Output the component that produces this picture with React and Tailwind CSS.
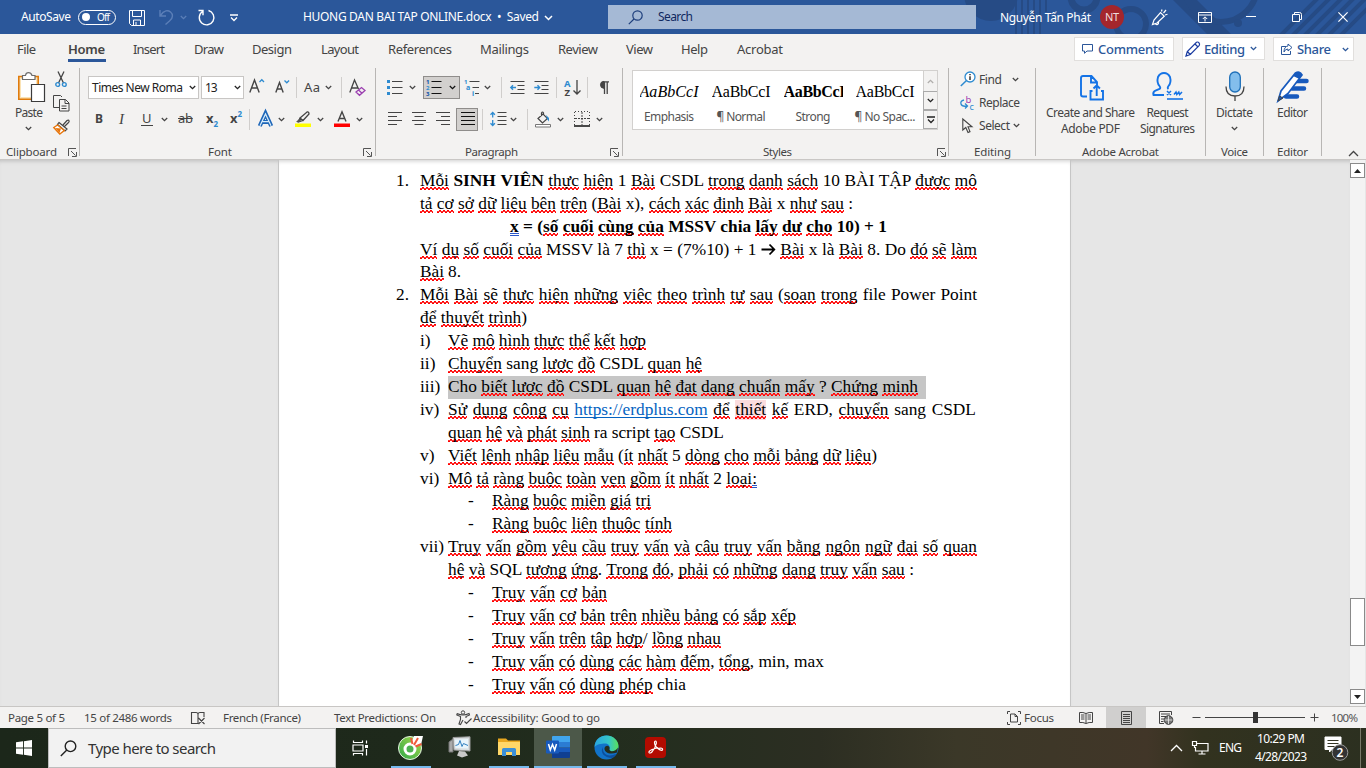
import React, { useLayoutEffect, useRef } from "react";

/* Text run fitted to a given width by adjusting letter or word spacing. */
function Fit({ w, children, className = "", words = 0 }) {
  const ref = useRef(null);
  useLayoutEffect(() => {
    const el = ref.current;
    el.style.letterSpacing = "0px";
    el.style.wordSpacing = "0px";
    const natural = el.getBoundingClientRect().width;
    const text = el.textContent;
    if (words > 1) el.style.wordSpacing = (w - natural) / (words - 1) + "px";
    else if (text.length > 1) el.style.letterSpacing = (w - natural) / (text.length - 1) + "px";
  }, [w, words]);
  return (
    <span className={"block shrink-0 whitespace-nowrap " + className} style={{ width: w }}>
      <span ref={ref} className="inline-block">{children}</span>
    </span>
  );
}

function Svg({ w, h, className = "", children }) {
  return (
    <svg width={w} height={h} viewBox={`0 0 ${w} ${h}`} fill="none" stroke="currentColor" overflow="visible" className={"block shrink-0 " + className}>
      {children}
    </svg>
  );
}

const Chev = ({ className = "" }) => (
  <Svg w={7} h={5} className={className}><path d="M.8 1 3.5 3.6 6.2 1" strokeWidth="1.3" /></Svg>
);
const C = ({ className = "", children }) => <div className={"flex h-full shrink-0 items-center " + className}>{children}</div>;
const VSep = () => <div className="h-[21px] w-px bg-[#d0cecc]" />;
const Launcher = () => (
  <Svg w={9} h={9} className="text-[#555]"><path d="M.5 8V.5H8M3 3l4.5 4.5M8.5 4v4.5H4" /></Svg>
);
const Lines = ({ rows, className = "" }) => (
  <Svg w={15} h={14} className={className}>
    {rows.map(([a, b], i) => <path key={i} d={`M${a} ${0.5 + i * 4}H${b}`} />)}
  </Svg>
);

/* ---------- Title bar ---------- */
function TitleBar() {
  return (
    <header className="relative flex h-[34px] items-center overflow-hidden bg-[#2b579a] text-white">
      <svg width="430" height="34" viewBox="0 0 430 34" fill="none" stroke="currentColor" className="absolute top-0 right-0 text-[#264b85]">
        <circle cx="55" cy="-6" r="27" fill="currentColor" stroke="none" />
        <path d="M80 0v34M86 0v34M92 0v34M98 0v34M104 0v34M110 0v12" strokeWidth="2" />
        <circle cx="148" cy="-3" r="13" strokeWidth="7" />
        <circle cx="195" cy="24" r="15" strokeWidth="6" />
        <path d="M233-4 279 42h24L257-4z" fill="currentColor" stroke="none" />
        <circle cx="285" cy="-14" r="36" strokeWidth="6" />
        <circle cx="302" cy="23" r="4" fill="currentColor" stroke="none" />
        <path d="m342 38 42-42M354 38l42-42M366 38l42-42M378 38l42-42M390 38l42-42M402 38l42-42" strokeWidth="4" />
      </svg>
      <div className="relative flex h-full w-full items-center text-[12px]">
        <Fit w={50} className="ml-[21px]">AutoSave</Fit>
        <div className="ml-[7px] flex h-[15px] w-[38px] items-center rounded-full border border-white pl-[3px]">
          <div className="h-[8px] w-[8px] rounded-full bg-white" />
          <Fit w={13} className="ml-[7px] text-[10px] leading-[13px]">Off</Fit>
        </div>
        <Svg w={16} h={16} className="mt-[2px] ml-[13px]"><path d="M.5.5h15v15h-13l-2-2zM3.5.5v6h9v-6M4.5 15.500V10h7v5.500M7 15v-3" /></Svg>
        <Svg w={15} h={16} className="ml-[14px] text-[#5b7fb8]"><path d="M1 1v6h6M1.500 6.500C5 1 9 1 11.500 3s3 6-1 9l-4 3.500" strokeWidth="1.400" /></Svg>
        <Chev className="ml-[6px] text-[#5b7fb8]" />
        <Svg w={18} h={18} className="mt-[2px] ml-[10px]"><path d="M11.500 1.500a7.300 7.300 0 1 1-6 1M1.500 1.500h4.500v4.700" strokeWidth="1.400" /></Svg>
        <Svg w={8} h={8} className="mt-[1px] ml-[15px]"><path d="M0 1h8M1 3.500l3 3 3-3" strokeWidth="1.300" /></Svg>
        <Fit w={236} className="ml-[65px]">HUONG DAN BAI TAP ONLINE.docx&nbsp; • &nbsp;Saved</Fit>
        <Svg w={9} h={6} className="mt-[2px] ml-[5px]"><path d="m1 1 3.500 3.500L8 1" strokeWidth="1.500" /></Svg>
        <div className="ml-[55px] flex h-[24px] w-[368px] items-center bg-[#a5b9d5] pl-[20px] text-[#0f2860]">
          <Svg w={15} h={15} className="text-[#1e3f7c]"><circle cx="9.500" cy="5.500" r="4.700" strokeWidth="1.200" /><path d="M6 9 .8 14.200" strokeWidth="1.200" /></Svg>
          <Fit w={35} className="ml-[15px]">Search</Fit>
        </div>
        <Fit w={91} className="mt-[1px] ml-[24px]">Nguyễn Tấn Phát</Fit>
        <div className="ml-[9px] flex h-[24px] w-[24px] items-center justify-center rounded-full bg-[#a4262c] text-[#f0dcdc]"><Fit w={14} className="text-[11px] leading-[12px]">NT</Fit></div>
        <Svg w={17} h={17} className="ml-[27px]"><path d="M1.500 15.500 3 11l6.500-7.500 3.800 3.700L6 14zM1.500 15.500l4.500-1.500M4 14.500c1.500 2 4 1 3.500-1.500M10.500 2.500l.5-2M12.500 4l2.500-3M14 6l2.500-.8" strokeWidth="1.200" /></Svg>
        <Svg w={14} h={11} className="ml-[30px]"><path d="M.5.5h13v10H.5zM.5 3h13M7 9.500V5M4.800 7 7 4.800 9.200 7" /></Svg>
        <Svg w={10} h={3} className="ml-[34px]"><path d="M0 .5h10" /></Svg>
        <Svg w={10} h={10} className="ml-[36px]"><path d="M.5 2.500h7v7h-7zM2.500 2V.5h5q2 0 2 2v5H8" /></Svg>
        <Svg w={10} h={10} className="ml-[36px]"><path d="m.4.4 9.200 9.200m0-9.200L.4 9.600" strokeWidth="1.200" /></Svg>
      </div>
    </header>
  );
}

/* ---------- Tabs ---------- */
function Tabs() {
  return (
    <nav className="flex h-[32px] items-start text-[13px] leading-[31px] text-[#444]">
      <Fit w={19} className="ml-[17px]">File</Fit>
      <div className="relative ml-[32px] font-semibold">
        <Fit w={37}>Home</Fit>
        <div className="absolute top-[25px] left-0 h-[3px] w-[38px] bg-[#2b579a]" />
      </div>
      <Fit w={32} className="ml-[28px]">Insert</Fit>
      <Fit w={30} className="ml-[29px]">Draw</Fit>
      <Fit w={40} className="ml-[28px]">Design</Fit>
      <Fit w={38} className="ml-[29px]">Layout</Fit>
      <Fit w={64} className="ml-[29px]">References</Fit>
      <Fit w={49} className="ml-[28px]">Mailings</Fit>
      <Fit w={40} className="ml-[29px]">Review</Fit>
      <Fit w={27} className="ml-[28px]">View</Fit>
      <Fit w={27} className="ml-[28px]">Help</Fit>
      <Fit w={46} className="ml-[29px]">Acrobat</Fit>
      <div className="mt-[3px] ml-[291px] flex h-[24px] w-[100px] items-center border border-[#e1dfdd] bg-white pl-[7px] font-medium text-[#2b579a]">
        <Svg w={11} h={10}><path d="M.5.5h10v6.500H5L2.500 9.300V7h-2z" /></Svg>
        <Fit w={66} className="ml-[5px] leading-[22px]">Comments</Fit>
      </div>
      <div className="mt-[3px] ml-[8px] flex h-[23px] w-[83px] items-center border border-[#e1dfdd] bg-white pl-[2px] font-medium text-[#2b579a]">
        <Svg w={16} h={16} className="text-[#1a3ba0]"><path d="M1 15l1.300-4.500L11.500 1.300q1.500-.8 2.500.5t.3 2.500L5.300 13.500zM2.300 10.500l3 3M10 3l3 3" strokeWidth="1.200" /></Svg>
        <Fit w={41} className="ml-[3px] leading-[22px]">Editing</Fit>
        <Chev className="ml-[5px]" />
      </div>
      <div className="mt-[3px] ml-[8px] flex h-[24px] w-[81px] items-center border border-[#e1dfdd] bg-white pl-[7px] font-medium text-[#2b579a]">
        <Svg w={12} h={12}><path d="M5 3.500H.5v8h9V8M7 1l4 3.500L7 8V6Q4 6 3 9q0-5.500 4-6z" /></Svg>
        <Fit w={34} className="ml-[4px] leading-[22px]">Share</Fit>
        <Chev className="ml-[11px]" />
      </div>
    </nav>
  );
}

/* ---------- Ribbon groups ---------- */
function Group({ label, w, className = "", launcher, children, labelPad = "" }) {
  return (
    <section className={"flex h-[88px] shrink-0 flex-col border-r border-[#b8b6b4] " + className}>
      <div className="h-[77px] shrink-0">{children}</div>
      <div className={"flex h-[14px] shrink-0 items-center text-[11.5px] leading-[14px] text-[#444] " + labelPad}>
        <Fit w={w}>{label}</Fit>
        {launcher}
      </div>
    </section>
  );
}

function Clipboard() {
  return (
    <Group label="Clipboard" w={51} className="w-[80px]" labelPad="pl-[6px]" launcher={<div className="ml-[11px]"><Launcher /></div>}>
      <div className="flex pl-[15px]">
        <div className="flex w-[38px] flex-col pt-[4px]">
          <Svg w={29} h={31} className="ml-[2px]">
            <path d="M1.800 4.500h19.400v22.700H1.800z" fill="#fbe3b5" stroke="#e07b0c" strokeWidth="1.600" />
            <path d="M4 7h15v18H4z" fill="#fff" stroke="none" />
            <path d="M5.500 7.500v-4h3Q9 .7 11.500.7T15 3.500h3v4z" fill="#fff" stroke="#6b6b6b" strokeWidth="1.200" />
            <path d="M14.500 12.500h13v17h-13z" fill="#fff" stroke="#3b3b3b" strokeWidth="1.200" />
          </Svg>
          <Fit w={28} className="mt-px text-[12px] leading-[18px] text-[#444]">Paste</Fit>
          <Chev className="mt-[4px] ml-[10px] text-[#444]" />
        </div>
        <div className="flex flex-col">
          <Svg w={12} h={17} className="mt-[3px] ml-[2px] text-[#444]">
            <path d="M3 .5 8.500 12M9 .5 3.500 12" strokeWidth="1.300" /><circle cx="2.700" cy="13.500" r="1.900" stroke="#2e8bd0" strokeWidth="1.400" /><circle cx="9.300" cy="13.500" r="1.900" stroke="#2e8bd0" strokeWidth="1.400" />
          </Svg>
          <Svg w={17} h={17} className="mt-[7px] text-[#444]"><path d="M6 12.500H.5V.5h7L9 2M6.500 4.500h6l3.500 3.500v8H6.500zM12 4.500V8.500h4M8.500 11h5M8.500 13.500h5" /></Svg>
          <Svg w={17} h={16} className="mt-[7px]"><path d="m10 6 4-4.500q1.500-1 2 .3t-.5 1.700L11.500 7.500M6 3.500l8 6.500-2 2L4.500 5.500z" stroke="#444" strokeWidth="1.200" fill="#f3f2f1" /><path d="M4.500 6 .8 8.500l6 6.500 4.500-3.500z" stroke="#e8750a" fill="#fff" strokeWidth="1.400" /><path d="m2.500 9 5.500.5-1.500 4.500z" fill="#e8750a" stroke="none" /></Svg>
        </div>
      </div>
    </Group>
  );
}

function FontGroup() {
  return (
    <Group label="Font" w={24} className="w-[296px]" labelPad="pl-[128px]" launcher={<div className="ml-[131px]"><Launcher /></div>}>
      <div className="flex h-[39px] items-center pl-[8px] text-[#444]">
        <div className="flex h-[23px] w-[111px] shrink-0 items-center border border-[#c8c6c4] bg-white pl-[3px] text-[12px] leading-[20px] text-[#222]"><Fit w={91}>Times New Roma</Fit><Chev className="ml-[6px]" /></div>
        <div className="mr-[5px] ml-[2px] flex h-[23px] w-[43px] shrink-0 items-center border border-[#c8c6c4] bg-white pl-[3px] text-[12px] leading-[20px] text-[#222]"><Fit w={12.5}>13</Fit><Chev className="ml-[16px]" /></div>
        <C className="w-[26px]"><Svg w={17} h={16} className="-mt-[4px]"><path d="M.8 14.500 5.500 2l4.700 12.500M2.500 10h6" strokeWidth="1.400" /><path d="m10.500 4 2.300-2.300L15 4" stroke="#2e8bd0" strokeWidth="1.300" /></Svg></C>
        <C className="w-[21px]"><Svg w={16} h={16} className="-mt-[4px]"><path d="M.8 14.500 4.500 4.500l3.700 10M2.300 11h4.500" strokeWidth="1.400" /><path d="m9.500 2.500 2.300 2.300 2.300-2.300" stroke="#2e8bd0" strokeWidth="1.300" /></Svg></C>
        <C className="w-[8px]"><VSep /></C>
        <C className="w-[21px]"><Fit w={16} className="text-[13px]">Aa</Fit></C>
        <C className="w-[16px]"><Chev /></C>
        <C className="w-[8px]"><VSep /></C>
        <Svg w={17} h={16}><path d="M.8 12.500 5.500 0l4 9M2.500 8h6" strokeWidth="1.300" /><path d="m7 12 5.500-4.500 3.500 3-5.500 4.800zM9.500 10l3.500 3.200" stroke="#9b3fb0" strokeWidth="1.300" /></Svg>
      </div>
      <div className="mt-px flex h-[22px] items-center pl-[15px] text-[13px] text-[#444]">
        <C className="w-[24px] text-[12px] font-bold">B</C>
        <C className="w-[22px] font-['Liberation_Serif',serif] text-[15px] italic">I</C>
        <C className="w-[20px]"><span className="border-b border-[#444] px-px leading-[13px]">U</span></C>
        <C className="w-[17px]"><Chev /></C>
        <C className="w-[28px]"><Fit w={15}><s>ab</s></Fit></C>
        <C className="w-[24px] font-bold">x<span className="mt-[10px] text-[8px] text-[#2e8bd0]">2</span></C>
        <C className="w-[19px] font-bold">x<span className="mb-[10px] text-[8px] text-[#2e8bd0]">2</span></C>
        <C className="w-[9px]"><VSep /></C>
        <C className="w-[20px]"><Svg w={15} h={15}><path d="M1.800 14 7.500 1.500l5.700 12.500M4 10h7" stroke="#1d66b8" strokeWidth="4.200" /><path d="M2 13.800 7.500 2l5.500 11.800M4 9.700h7" stroke="#d8ecfa" strokeWidth="1.200" /></Svg></C>
        <C className="w-[17px]"><Chev /></C>
        <C className="w-[22px]"><Svg w={16} h={16}><path d="M0 12.500h16V16H0z" fill="#ff0" stroke="none" /><path d="m5 7 7-6q2-.5 2 2L8 9.500zM5 7 3.500 11l4.500-1.500" strokeWidth="1.300" /><path d="M1 11h4l1-2-2-1z" fill="#555" stroke="none" /></Svg></C>
        <C className="w-[17px]"><Chev /></C>
        <C className="w-[22px]"><Svg w={16} h={16}><path d="M0 12.500h16V16H0z" fill="#f00" stroke="none" /><path d="M4 10.500 8 .8l4 9.700M5.300 7.500h5.400" strokeWidth="1.400" /></Svg></C>
        <Chev />
      </div>
    </Group>
  );
}

const T = ({ x, y, size = 6, fill, children }) => <text x={x} y={y} fontSize={size} fontWeight="700" fill={fill} stroke="none">{children}</text>;

function Paragraph() {
  return (
    <Group label="Paragraph" w={53} className="w-[247px]" labelPad="pl-[89px]" launcher={<div className="ml-[92px]"><Launcher /></div>}>
      <div className="flex h-[39px] items-center pl-[11px] text-[#444]">
        <C className="w-[22px]"><Svg w={16} h={15}><path d="M5 1.500h10.500M5 7.500h10.500M5 13.500h10.500" /><path d="M0 0h3v3H0zM0 6h3v3H0zM0 12h3v3H0z" fill="#2e8bd0" stroke="none" /></Svg></C>
        <C className="w-[14px]"><Chev /></C>
        <div className="mr-[4px] flex h-[23px] w-[37px] shrink-0 items-center border border-[#8f8d8b] bg-[#d2d0ce] pl-[2px]">
          <Svg w={16} h={17} className="text-[#111]"><path d="M5.500 2.500h10M5.500 8.500h10M5.500 14.500h10" /><T x="0" y="5" fill="#0b4fa8">1</T><T x="0" y="10.800" fill="#2e8bd0">2</T><T x="0" y="16.600" fill="#0b4fa8">3</T></Svg>
          <Chev className="ml-[7px] text-[#111]" />
        </div>
        <C className="w-[20px]"><Svg w={17} h={17}><path d="M5.500 2.500h10M8.500 8.500h6.500M11 14.500h4" /><T x="0" y="5" fill="#2e8bd0">1</T><T x="2" y="11" size={7} fill="#2e8bd0">a</T><T x="8" y="17" size={7} fill="#2e8bd0">i</T></Svg></C>
        <C className="w-[17px]"><Chev /></C>
        <C className="w-[9px]"><VSep /></C>
        <C className="w-[24px]"><Svg w={15} h={13}><path d="M.5.5h14M7.500 4.500h7M7.500 8.500h7M.5 12.500h14" /><path d="M6 6.500H.8M3 4.200.8 6.500 3 8.800" stroke="#2e8bd0" strokeWidth="1.400" /></Svg></C>
        <C className="w-[22px]"><Svg w={15} h={13}><path d="M.5.5h14M7.500 4.500h7M7.500 8.500h7M.5 12.500h14" /><path d="M.3 6.500H5.500M3.500 4.200l2.200 2.300L3.500 8.800" stroke="#2e8bd0" strokeWidth="1.400" /></Svg></C>
        <C className="w-[8px]"><VSep /></C>
        <C className="w-[23px]"><Svg w={17} h={17}><T x="0" y="7.500" size={9.5} fill="#2e8bd0">A</T><T x="0.500" y="17" size={9.5} fill="#444">Z</T><path d="M13 1v14M9.500 11.500 13 15l3.500-3.500" strokeWidth="1.300" /></Svg></C>
        <C className="w-[11px]"><VSep /></C>
        <Svg w={11} h={13}><path d="M5.500.8H11M6.500 1v12M9.200 1v12" strokeWidth="1.300" /><path d="M6 .3a3.300 3.300 0 0 0 0 7z" fill="currentColor" /></Svg>
      </div>
      <div className="mt-px flex h-[22px] items-center pl-[11px] text-[#444]">
        <C className="w-[24px]"><Lines rows={[[1, 15], [1, 10], [1, 15], [1, 10]]} /></C>
        <C className="w-[24px]"><Lines rows={[[1, 15], [3.5, 12.5], [1, 15], [3.5, 12.5]]} /></C>
        <C className="w-[21px]"><Lines rows={[[1, 15], [6, 15], [1, 15], [6, 15]]} /></C>
        <div className="mr-[4px] flex h-[23px] w-[22px] shrink-0 items-center justify-center border border-[#8f8d8b] bg-[#d2d0ce]"><Lines rows={[[1, 15], [1, 15], [1, 15], [1, 15]]} className="text-[#111]" /></div>
        <C className="w-[8px]"><VSep /></C>
        <C className="w-[20px]"><Svg w={17} h={14}><path d="M7.500.5h9M7.500 4.500h9M7.500 8.500h9M7.500 12.500h9" /><path d="M2.700.5v5M.5 2.700 2.700.5l2.200 2.200M2.700 8v5.500M.5 11.300l2.200 2.200 2.200-2.200" stroke="#2e8bd0" strokeWidth="1.300" /></Svg></C>
        <C className="w-[17px]"><Chev /></C>
        <C className="w-[8px]"><VSep /></C>
        <C className="w-[22px]"><Svg w={17} h={17}><path d="M.5 13.500h15v2.500H.5z" fill="#fff" stroke="#777" /><path d="m3 7.500 5-4.500 4.500 4.500-5 4.500zM6.500 5V2q1-2 2 0v1.500" strokeWidth="1.200" /><path d="m11 4 3 3v3.500l-2-2.500z" fill="#2e8bd0" stroke="none" /></Svg></C>
        <C className="w-[17px]"><Chev /></C>
        <C className="w-[22px]"><Svg w={16} h={16}><path d="M1 .5h14M.5 1v13M15.500 1v13" strokeDasharray="1 2" /><path d="M8 1v13M1 7.500h14" strokeDasharray="2 1" /><path d="M0 15h16" stroke="#111" strokeWidth="1.500" /></Svg></C>
        <Chev />
      </div>
    </Group>
  );
}

function Styles() {
  const items = [
    ["Emphasis", 50, "italic"],
    ["¶ Normal", 49, ""],
    ["Strong", 35, "font-bold"],
    ["¶ No Spac...", 61, ""],
  ];
  return (
    <Group label="Styles" w={29} className="w-[326px]" labelPad="pl-[140px]" launcher={<div className="ml-[145px]"><Launcher /></div>}>
      <div className="pt-[2px] pl-[9px]">
        <div className="flex h-[60px] w-[306px] border border-[#d2d0ce] bg-white">
          <div className="flex w-[290px]">
            {items.map(([name, w, cls]) => (
              <div key={name} className="flex w-[72px] flex-col items-center">
                <div className="mt-[11px] h-[20px] w-[59px] overflow-hidden"><Fit w={name === "Strong" ? 62 : 59} className={"font-['Liberation_Serif',serif] text-[16px] leading-[20px] text-black " + cls}>AaBbCcI</Fit></div>
                <Fit w={w} className="mt-[7px] text-[12px] leading-[16px] text-[#555]">{name}</Fit>
              </div>
            ))}
          </div>
          <div className="flex flex-1 flex-col bg-[#f3f2f1] text-[#222]">
            <div className="flex h-[20px] items-center justify-center border-l border-[#d2d0ce] text-[#b0aeac]"><Chev className="rotate-180" /></div>
            <div className="flex h-[19px] items-center justify-center border border-r-0 border-[#aaa]"><Chev /></div>
            <div className="flex h-[19px] items-center justify-center border border-r-0 border-[#aaa]"><Svg w={8} h={8}><path d="M0 1h8M1 3.500l3 3 3-3" strokeWidth="1.300" /></Svg></div>
          </div>
        </div>
      </div>
    </Group>
  );
}

function Editing() {
  return (
    <Group label="Editing" w={37} className="w-[87px]" labelPad="pl-[25px]">
      <div className="flex flex-col pl-[11px] text-[12px] leading-[20px] text-[#444]">
        <div className="flex h-[23px] items-center">
          <C className="w-[19px]"><Svg w={16} h={16} className="-mt-[2px]"><circle cx="10" cy="6" r="5" fill="#fff" stroke="#2e8bd0" strokeWidth="1.300" /><path d="M6.500 9.500.8 15" stroke="#2e8bd0" strokeWidth="1.500" /><path d="M10 3v1.300M10 5.300V9" stroke="#222" strokeWidth="1.400" /></Svg></C>
          <Fit w={23}>Find</Fit><Chev className="ml-[10px]" />
        </div>
        <div className="flex h-[23px] items-center">
          <C className="w-[19px]"><Svg w={15} h={16}><text x="5.500" y="7.500" fontSize="9.500" fill="#a03fb0" stroke="none">b</text><text x="9.500" y="15" fontSize="9" fill="#2e8bd0" stroke="none">c</text><path d="M4 5Q0 6 1 9t6 2M5 8.500 7.500 11 5 13.500" stroke="#2e8bd0" strokeWidth="1.300" /></Svg></C>
          <Fit w={41}>Replace</Fit>
        </div>
        <div className="flex h-[23px] items-center">
          <C className="w-[19px] pl-[2px]"><Svg w={11} h={16}><path d="M.8 1v11l3-2.500L6 14.500l2-.9-2-4.800h4z" strokeWidth="1.100" /></Svg></C>
          <Fit w={31}>Select</Fit><Chev className="ml-[3px]" />
        </div>
      </div>
    </Group>
  );
}

function Acrobat() {
  return (
    <Group label="Adobe Acrobat" w={77} className="w-[170px]" labelPad="pl-[46px]">
      <div className="flex pl-[10px] text-[12px] leading-[16px] text-[#444]">
        <div className="flex w-[89px] flex-col items-center">
          <Svg w={24} h={26} className="mt-[7px] ml-[3px] text-[#1473e6]"><path d="M7 21.500H3q-2 0-2-2V3q0-2 2-2h8.500L17 7v3M11 1v6.500h6M12.500 16h-2v8.500H23V16h-2M16.700 21v-10.500M13.500 13.500l3.200-3.200 3.200 3.200" strokeWidth="1.900" /></Svg>
          <Fit w={89} className="mt-[4px]">Create and Share</Fit>
          <Fit w={59}>Adobe PDF</Fit>
        </div>
        <div className="ml-[5px] flex w-[55px] flex-col items-center">
          <Svg w={32} h={29} className="mt-[4px] text-[#1473e6]"><path d="M12 23H1.500q-1-3 2-4.500l4-1.500q1.500-1 0-3Q4.500 10.500 6 5q2-4 6-4t6 4q1.500 5.500-1.500 9-1.500 2 0 3" strokeWidth="1.900" /><path d="m15 19 4 4m0-4-4 4M22 22.500l2-2.500.8 2.500 2-2.500.8 2.500 2.400-2.500" strokeWidth="1.500" /><path d="M15 27h16" strokeWidth="1.600" /></Svg>
          <Fit w={42} className="mt-[4px]">Request</Fit>
          <Fit w={55}>Signatures</Fit>
        </div>
      </div>
    </Group>
  );
}

function Ribbon() {
  return (
    <div className="flex h-[94px] border-b border-[#c9c7c5] pt-[2px]">
      <Clipboard />
      <FontGroup />
      <Paragraph />
      <Styles />
      <Editing />
      <Acrobat />
      <Group label="Voice" w={27} className="w-[58px]" labelPad="pl-[15px]">
        <div className="flex flex-col items-center text-[12px] leading-[16px] text-[#444]">
          <Svg w={20} h={31} className="mt-[3px]"><rect x="4.700" y="1" width="10.600" height="20" rx="5.300" fill="#83beec" stroke="#1d6fb8" strokeWidth="1.300" /><path d="M1 15.500q0 9.500 9 9.500t9-9.500M10 25v5" strokeWidth="1.300" /></Svg>
          <Fit w={37} className="mt-[3px]">Dictate</Fit>
          <Chev className="mt-[5px]" />
        </div>
      </Group>
      <Group label="Editor" w={31} className="w-[58px]" labelPad="pl-[13px]">
        <div className="flex flex-col items-center text-[12px] leading-[16px] text-[#444]">
          <Svg w={31} h={31} className="mt-[3px]"><path d="M19 10h10.500M15 17.500h12M9 25.500h11" stroke="#185abd" strokeWidth="4.500" strokeLinecap="round" /><path d="M1 30 4 20 18.500 2q4-2.500 6.500 2L11 22.500z" fill="#fff" stroke="#185abd" strokeWidth="1.700" /><path d="M16 5l3-3.500q4-2 6 2.500l-2.500 4z" fill="#185abd" stroke="none" /><path d="m1 30 1.500-5 3.500 2z" fill="#185abd" /></Svg>
          <Fit w={31} className="mt-[3px]">Editor</Fit>
        </div>
      </Group>
      <div className="flex flex-1 items-end pb-[2px] pl-[26px] text-[#444]"><Svg w={11} h={7}><path d="m1 6 4.500-4.500L10 6" strokeWidth="1.300" /></Svg></div>
    </div>
  );
}

/* ---------- Document ---------- */
/* Zigzag underline: peaks and troughs two pixels wide around a solid middle row. */
const SQ =
  "bg-[linear-gradient(90deg,#f00_2px,transparent_2px),linear-gradient(90deg,#ff3030,#ff3030),linear-gradient(90deg,#f00_2px,transparent_2px)] bg-[length:4px_1px,4px_1px,4px_1px] bg-[position:0px_18px,0px_17px,2px_16px] bg-repeat-x pb-px";
const DBL =
  "bg-[linear-gradient(#2b57c9,#2b57c9),linear-gradient(#2b57c9,#2b57c9)] bg-[length:100%_1px,100%_1px] bg-[position:0px_16px,0px_18px] bg-no-repeat pb-px";

/* A leading ^ marks a correctly spelled word, * a bold one, = a grammar hint. */
function Word({ t }) {
  if (t === "^→")
    return (
      <svg width="15" height="13" viewBox="0 0 15 13" className="inline-block align-[-1px]" fill="none" stroke="#000" strokeWidth="1.800"><path d="M.5 6.500H13M8.500 1.500 13.300 6.500 8.500 11.500" /></svg>
    );
  if (t.startsWith("^")) return t.slice(1);
  if (t.startsWith("*")) return <b>{t.slice(1)}</b>;
  if (t.startsWith("=")) return <span className={DBL}>{t.slice(1)}</span>;
  if (t.startsWith("http")) return <span className="text-[#0563c1] underline decoration-[1px] underline-offset-[2px] [text-decoration-skip-ink:none]">{t}</span>;
  const [, a, b, c] = t.match(/^(\(?)(.*?)([),.:/]*)$/);
  if (b === "thiết") return <span className={"bg-[#fbdcde] " + SQ}>{b}</span>;
  return <>{a}<span className={SQ}>{b}</span>{c === ":" ? <Word t="=:" /> : c}</>;
}

const LINES = [
  [420, 977, "1.", 396, "Mỗi *SINH *VIÊN thực hiện ^1 Bài ^CSDL trong danh sách ^10 ^BÀI ^TẬP được mô"],
  [420, 853, "", 0, "tả cơ sở dữ liệu bên trên (Bài ^x), cách xác định Bài ^x như sau ^:"],
  [510, 887, "", 0, "=x ^= (số cuối cùng của ^MSSV ^chia lấy dư cho ^10) ^+ ^1", "font-bold"],
  [420, 977, "", 0, "Ví dụ số cuối của ^MSSV ^là ^7 thì ^x ^= ^(7%10) ^+ ^1 ^→ Bài ^x ^là Bài ^8. ^Do đó sẽ làm"],
  [420, 461, "", 0, "Bài ^8."],
  [420, 977, "2.", 396, "Mỗi Bài sẽ thực hiện những việc theo trình tự sau (soạn trong ^file ^Power ^Point"],
  [420, 527, "", 0, "để thuyết trình)"],
  [448, 646, "i)", 420, "Vẽ mô hình thực thể kết hợp"],
  [448, 702, "ii)", 420, "Chuyển ^sang lược đồ ^CSDL quan hệ"],
  [448, 918, "iii)", 420, "^Cho biết lược đồ ^CSDL quan hệ đạt dạng chuẩn mấy ^? Chứng minh", "hl"],
  [448, 976, "iv)", 420, "Sử dụng công cụ https://erdplus.com để thiết kế ^ERD, chuyển ^sang ^CSDL"],
  [448, 724, "", 0, "quan hệ và phát sinh ^ra ^script tạo ^CSDL"],
  [448, 877, "v)", 420, "Viết lệnh nhập liệu mẫu (ít nhất ^5 dòng cho mỗi bảng dữ liệu)"],
  [448, 757, "vi)", 420, "Mô tả ràng buộc toàn vẹn gồm ít nhất ^2 loại:"],
  [492, 651, "-", 468, "Ràng buộc miền giá trị"],
  [492, 672, "-", 468, "Ràng buộc liên thuộc tính"],
  [448, 977, "vii)", 420, "Truy vấn gồm yêu cầu truy vấn và câu truy vấn bằng ngôn ngữ đại số quan"],
  [448, 914, "", 0, "hệ và ^SQL tương ứng. Trong đó, phải có những dạng truy vấn sau ^:"],
  [492, 607, "-", 468, "Truy vấn cơ bản"],
  [492, 796, "-", 468, "Truy vấn cơ bản trên nhiều bảng có sắp xếp"],
  [492, 721, "-", 468, "Truy vấn trên tập hợp/ lồng nhau"],
  [492, 824, "-", 468, "Truy vấn có dùng các hàm đếm, tổng, ^min, ^max"],
  [492, 686, "-", 468, "Truy vấn có dùng phép ^chia"],
];
const PAGE_X = 279;

function Line({ l: [x0, x1, mark, mx, text, cls = ""] }) {
  const words = text.split(" ");
  const start = mark ? mx : x0;
  return (
    <div className="flex h-[22.91px] leading-[22.5px]" style={{ paddingLeft: start - PAGE_X }}>
      {mark && <span className="shrink-0 whitespace-nowrap" style={{ width: x0 - mx }}>{mark}</span>}
      <div className={cls === "hl" ? "bg-[#c6c6c6] pr-[8px]" : cls}>
        <Fit w={x1 - x0} words={words.length}>
          {words.map((t, i) => <React.Fragment key={i}>{i > 0 && " "}<Word t={t} /></React.Fragment>)}
        </Fit>
      </div>
    </div>
  );
}

function Doc() {
  return (
    <main className="flex h-[546px] overflow-hidden bg-[#e6e6e6]">
      <div className="w-[278px] shrink-0 shadow-[inset_0_4px_4px_-3px_#bbb]" />
      <div className="w-[793px] shrink-0 border-x border-[#c6c6c6] bg-white pt-[9.800px] font-['Liberation_Serif',serif] text-[17.333px] text-black shadow-[inset_0_4px_4px_-3px_#ccc]">
        {LINES.map((l, i) => <Line key={i} l={l} />)}
      </div>
      <div className="flex-1 shadow-[inset_0_4px_4px_-3px_#bbb]" />
      <div className="mr-px flex w-[15px] flex-col bg-[#f3f3f3] pt-[3px] text-[#222]">
        <div className="flex h-[15px] items-center justify-center border border-[#8a8a8a] bg-white"><Svg w={7} h={4}><path d="M0 4 3.500 0 7 4z" fill="currentColor" stroke="none" /></Svg></div>
        <div className="mt-[420px] h-[48px] border border-[#8a8a8a] bg-white" />
        <div className="mt-[43px] flex h-[15px] items-center justify-center border border-[#8a8a8a] bg-white"><Svg w={7} h={4}><path d="M0 0h7L3.500 4z" fill="currentColor" stroke="none" /></Svg></div>
      </div>
    </main>
  );
}

/* ---------- Status bar ---------- */
function StatusBar() {
  return (
    <div className="flex h-[22px] items-center border-t border-[#c8c6c4] text-[11.5px] text-[#444]">
      <Fit w={57} className="ml-[8px]">Page 5 of 5</Fit>
      <Fit w={88} className="ml-[19px]">15 of 2486 words</Fit>
      <Svg w={15} h={14} className="ml-[19px]"><path d="M7 12.500H.5V1.500H5q2 0 2 2v9M7 3.500q0-2 2-2h4V6M7.500 7l6 6m0-6-6 6" strokeWidth="1.100" /></Svg>
      <Fit w={78} className="ml-[17px]">French (France)</Fit>
      <Fit w={102} className="mt-px ml-[33px]">Text Predictions: On</Fit>
      <Svg w={16} h={15} className="ml-[20px]"><circle cx="7" cy="2.500" r="1.700" /><path d="M1 3.500q6 3 12 0l.5 1.500-3.500 1.500V8M1 3.500.8 5l3.700 1.500v3L3 14l1.500.5L7 10M8.500 11.500l2 2 5-5" strokeWidth="1.100" /></Svg>
      <Fit w={127} className="mt-px ml-[1px]">Accessibility: Good to go</Fit>
      <Svg w={14} h={14} className="ml-[407px]"><path d="M3 .5H.5V3M11 .5h2.500V3M3 13.500H.5V11M11 13.500h2.500V11M3.500 3h4.500l2.500 2.500V11h-7zM8 3v2.500h2.500" /></Svg>
      <Fit w={30} className="mt-px ml-[3px]">Focus</Fit>
      <Svg w={14} h={12} className="ml-[25px]"><path d="M7 1.500Q4 0 .5.500v10Q4 10 7 11.500q3-1.500 6.500-1V.5Q10 0 7 1.500zM7 1.500v10M2 3h3.500M2 5h3.500M2 7h3.500M8.500 3H12M8.500 5H12M8.500 7H12" /></Svg>
      <div className="ml-[13px] flex h-full w-[40px] items-center justify-center bg-[#d0cfce]"><Svg w={11} h={14}><path d="M.5.5h10v13H.5zM2 3.500h7M2 5.500h7M2 7.500h7M2 9.500h7M2 11.500h7" /></Svg></div>
      <Svg w={15} h={14} className="ml-[13px]"><path d="M5 12.500H.5V.5h12V4M2 3h9M2 5.500h5M2 8h3M2 10.500h2.500" /><circle cx="9.500" cy="9" r="4.300" fill="#777" stroke="#333" /><path d="M5.500 9h8M9.500 5v8" stroke="#f3f2f1" strokeWidth=".8" /></Svg>
      <Svg w={9} h={9} className="ml-[18px]"><path d="M.5 4.500h8" /></Svg>
      <div className="ml-[4px] flex h-[11px] w-[100px] items-center"><div className="h-px w-[48px] bg-[#444]" /><div className="h-[11px] w-[5px] bg-[#333]" /><div className="h-px flex-1 bg-[#444]" /></div>
      <Svg w={9} h={9} className="ml-[5px]"><path d="M.5 4.500h8M4.500.5v8" /></Svg>
      <Fit w={27} className="ml-[12px] text-[#555]">100%</Fit>
    </div>
  );
}

/* ---------- Taskbar ---------- */
function Task({ on, active, children }) {
  return (
    <div className="flex h-full w-[49px] flex-col items-center">
      <div className={"flex h-[38px] w-[48px] items-center justify-center " + (active ? "bg-[#4c5849]" : "")}>{children}</div>
      {on && <div className={active ? "h-[2px] w-[48px] bg-[#76b9ed]" : "h-[2px] w-[40px] bg-[#76b9ed]"} />}
    </div>
  );
}

function Taskbar() {
  return (
    <footer className="flex h-[40px] items-center bg-[linear-gradient(90deg,#1c271a_0%,#1e291b_30%,#242e1f_48%,#2c2e22_60%,#3b3828_70%,#413628_84%,#32321f_88%,#2c3020_100%)] text-white">
      <div className="flex w-[48px] justify-center"><Svg w={16} h={16}><path d="M0 2.300 7 1.300V7.600H0zM7.900 1.200 16 0v7.600H7.900zM0 8.500h7v6.300l-7-1zM7.900 8.500H16V16l-8.100-1.200z" fill="#fff" stroke="none" /></Svg></div>
      <div className="flex h-[40px] w-[288px] items-center border border-[#bdbdbd] bg-[#f2f2f2] pl-[11px] text-[#222]">
        <Svg w={17} h={17}><circle cx="10.500" cy="6.300" r="5.300" strokeWidth="1.400" /><path d="M6.800 10 .8 16" strokeWidth="1.400" /></Svg>
        <Fit w={128} className="ml-[11px] text-[15px] text-[#333]">Type here to search</Fit>
      </div>
      <div className="flex w-[49px] justify-center"><Svg w={17} h={16}><path d="M1.500.5v2h9v-2M1.500 15.500v-2h9v2M1 5h10v6H1zM14.500.5v3M14.500 9v6.500" strokeWidth="1.200" /><path d="M13 5h3v3h-3z" fill="#fff" stroke="none" /></Svg></div>
      <div className="ml-px flex h-full">
        <Task on>
          <Svg w={25} h={25}><defs><linearGradient id="cg" x1="0" y1="1" x2="1" y2="0"><stop stopColor="#2fa84a" /><stop offset="1" stopColor="#a8d94a" /></linearGradient></defs><circle cx="12" cy="13" r="11.500" fill="url(#cg)" stroke="#e8f5e4" strokeWidth="1" /><path d="M12 11 16 1h9l-2 9z" fill="#fff" stroke="none" /><circle cx="12" cy="14" r="5" stroke="#fff" strokeWidth="3" fill="#4bb050" /><path d="m14.500 9-1.500-6M16 10l4-7M17.500 11.500l6-2.500" stroke="#f05a3c" strokeWidth="2" /></Svg>
        </Task>
        <Task>
          <Svg w={23} h={22}><path d="m1 6 4-3v13H1z" fill="#aaa" stroke="#777" /><path d="M5 1.500 22 .8V15L6 14z" fill="#d9dee0" stroke="#9a9a9a" /><path d="M7 3.500 20 3v9.500L7.500 12z" fill="#e8f4fb" stroke="none" /><path d="m7.500 9.500 3-1 1.500-4 2 6 1.500-3 4.500 2" stroke="#2f7fc0" /><path d="m11 15 6 .5 3 4-6 2-5-2z" fill="#c9c9c9" stroke="none" /></Svg>
        </Task>
        <Task on>
          <Svg w={22} h={20}><path d="M0 1.500h8l2 2h12v14H0z" fill="#e9a820" stroke="none" /><path d="M0 5h22v13H0z" fill="#ffd768" stroke="none" /><path d="M4 19v-6.500q0-1.500 1.500-1.500h11q1.500 0 1.500 1.500V19h-4v-4H8v4z" fill="#3b8fd6" stroke="none" /></Svg>
        </Task>
        <Task on active>
          <Svg w={24} h={22}><path d="M6 1q0-1 1-1h17v6H6z" fill="#41a5ee" stroke="none" /><path d="M6 6h18v5.500H6z" fill="#2b7cd3" stroke="none" /><path d="M6 11.500h18V16H6z" fill="#185abd" stroke="none" /><path d="M6 16h18v5q0 1-1 1H6z" fill="#103f91" stroke="none" /><rect y="4.500" width="13" height="13" rx="1" fill="#185abd" stroke="none" /><path d="m2.500 8 1.800 6L6.500 8.500 8.700 14l1.800-6" stroke="#fff" strokeWidth="1.500" /></Svg>
        </Task>
        <Task on>
          <Svg w={25} h={25}><defs><linearGradient id="eg"><stop stopColor="#2aa5e0" /><stop offset=".6" stopColor="#35c6c8" /><stop offset="1" stopColor="#5be25a" /></linearGradient></defs><circle cx="12.500" cy="12.500" r="12" fill="#1273c9" stroke="none" /><path d="M.5 12C1 4.500 6 .5 12.500.5s12 5 12 10.500c0 4-3 6-6.500 6-3 0-3.500-1.500-2.500-3 1-3-1-5.500-4.500-5.500S2 9.500.5 12z" fill="url(#eg)" stroke="none" /><path d="M9 12c-1 5 3 10 10 8l3.300-1.300q-1 2-4 4.300C10 23 5.500 17 9 12z" fill="#0c4f9e" stroke="none" /><path d="M10.500 13c-.5 5 6 7 12.500 4.500l1-5c-2 4-9 5-8.500 1.500 1-3-3.500-5-5-1z" fill="#242e1f" stroke="none" /></Svg>
        </Task>
        <Task on>
          <Svg w={21} h={21}><rect width="21" height="21" rx="4" fill="#b30b00" stroke="none" /><path d="M4 15.500q-.5-1.500 3-3t9-1.500q2 .5 1.500 1.800t-4-.8T9.500 6Q9.500 4 10.500 4t.8 2.500Q10.500 11 6.500 15.500q-2 1-2.500 0z" stroke="#fff" strokeWidth="1.200" /></Svg>
        </Task>
      </div>
      <Svg w={13} h={8} className="ml-[490px]"><path d="m1 7 5.500-5.500L12 7" strokeWidth="1.300" /></Svg>
      <Svg w={17} h={14} className="ml-[9px]"><path d="M5 2.500h11v7.500H3.500V6M10 10v3M6.500 13h7M.5.500h4v4h-4zM2.500 4.500V7" strokeWidth="1.200" /></Svg>
      <Fit w={23} className="ml-[10px] text-[12px]">ENG</Fit>
      <div className="ml-[13px] flex w-[52px] flex-col items-center text-[12px] leading-[18px]"><Fit w={48}>10:29 PM</Fit><Fit w={52}>4/28/2023</Fit></div>
      <div className="relative ml-[17px] w-[36px]">
        <Svg w={26} h={25}><path d="M1 1h16v12.500H8L5.500 16v-2.500H1z" fill="#fff" stroke="#fff" /><path d="M3.500 4.500h11M3.500 7.500h11M3.500 10.500h7" stroke="#333424" strokeWidth="1.200" /><circle cx="16" cy="16.500" r="7.800" fill="#333" stroke="#999" /></Svg>
        <span className="absolute top-[9px] left-[12.500px] text-[12px] leading-[15px] font-semibold">2</span>
      </div>
      <div className="h-full w-px bg-[#777868]" />
    </footer>
  );
}

export default function App() {
  return (
    <div className="h-[768px] w-[1366px] overflow-hidden bg-[#f3f2f1] font-['Noto_Sans','Open_Sans',sans-serif]">
      <TitleBar />
      <Tabs />
      <Ribbon />
      <Doc />
      <StatusBar />
      <Taskbar />
    </div>
  );
}
